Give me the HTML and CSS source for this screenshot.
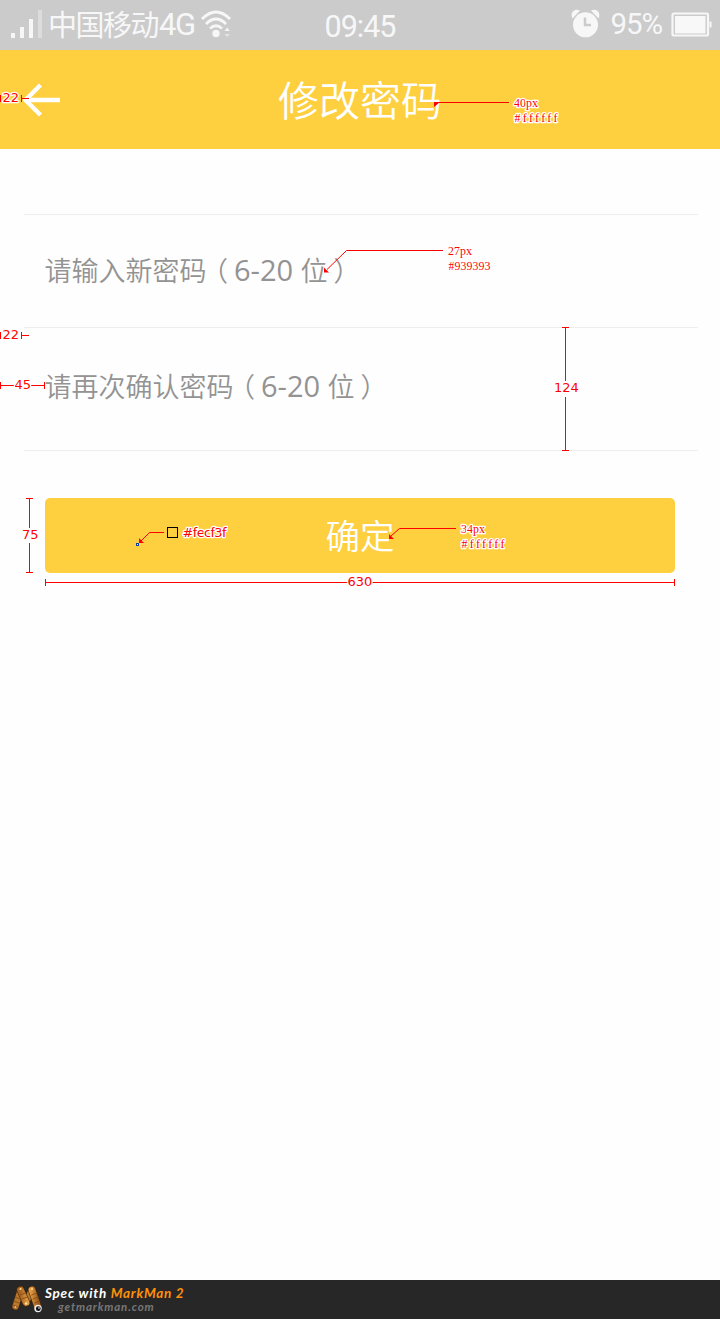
FILE: index.html
```html
<!DOCTYPE html>
<html lang="zh-CN">
<head>
<meta charset="utf-8">
<title>修改密码</title>
<link rel="stylesheet" href="styles.css">
</head>
<body>
<div class="page">
  <div class="status">
    <div class="status-left">
      <svg class="signal" width="34" height="30" viewBox="0 0 34 30">
        <path d="M1 23h4v5H1zM10 17h4v11h-4zM19 9h4v19h-4z" fill="#f7f7f7"/>
        <path d="M28 0h4v28h-4z" fill="#dcdcdc"/>
      </svg>
      <span class="carrier">中国移动</span><span class="network">4G</span>
      <svg class="wifi" width="31" height="30" viewBox="0 0 31 30">
        <g fill="none" stroke="#f7f7f7" stroke-width="2.8">
          <path d="M1 9Q15 -5 29 9"/><path d="M5 14Q15 4 25 14"/><path d="M9 18.500Q15 13 21 18.500"/>
        </g>
        <circle cx="15" cy="23.500" r="3.700" fill="#f7f7f7"/>
        <path d="M23.500 21l2.700-3.500 2.700 3.500z" fill="#f4f4f4"/><path d="M23.500 24h5.400l-2.700 3z" fill="#e4e4e4"/>
      </svg>
    </div>
    <span class="clock">09:45</span>
    <div class="status-right">
      <svg class="alarm" width="29" height="29" viewBox="0 0 29 29">
        <g fill="#f7f7f7"><circle cx="14.500" cy="15.800" r="12.500"/><path d="M1.500 9.500C-1.500 4 3.500-1.500 9 1.500zM27.500 9.500C30.500 4 25.500-1.500 20 1.500z"/></g>
        <path d="M14 8.500v7.500h6" fill="none" stroke="#cbcbcb" stroke-width="2.500"/>
      </svg>
      <span class="percent">95%</span>
      <svg class="battery" width="42" height="26" viewBox="0 0 42 26">
        <rect x="1.500" y="1.500" width="35.500" height="22" rx="1.500" fill="none" stroke="#f7f7f7" stroke-width="2.200"/>
        <rect x="4" y="4" width="30.500" height="17.500" fill="#f8f8f8"/>
        <path d="M38.500 9.500h2v6h-2z" fill="#f7f7f7"/>
      </svg>
    </div>
  </div>
  <header class="header">
    <svg class="back" width="38" height="34" viewBox="0 0 38 34">
      <path d="M37 17H3M17.500 2L2.500 17 17.500 32" fill="none" stroke="#fff" stroke-width="4.500"/>
    </svg>
    <h1 class="title">修改密码</h1>
  </header>
  <main class="form">
    <div class="field first"><span>请输入新密码</span><span class="open">（</span><span class="latin">6-20 </span><span>位</span><span class="close">）</span></div>
    <div class="field second"><span>请再次确认密码</span><span class="open">（</span><span class="latin">6-20 </span><span>位</span><span class="close">）</span></div>
    <div class="submit">确定</div>
  </main>
  <footer class="footer">
    <svg class="logo" width="32" height="30" viewBox="0 0 32 30">
      <defs><linearGradient id="bronze" x1="0" y1="0" x2="1" y2="0"><stop offset="0" stop-color="#a86420"/><stop offset=".5" stop-color="#eda748"/><stop offset="1" stop-color="#9c5b1c"/></linearGradient></defs>
      <g fill="none" stroke-linecap="round">
        <path d="M4.500 21.500L9.500 5.500M20.500 5.500L15 17.500" stroke="#503010" stroke-width="7"/>
        <path d="M4.500 21.500L9.500 5.500M20.500 5.500L15 17.500" stroke="#b9772b" stroke-width="6"/>
        <path d="M9.500 5L15 17.500M21 5L27 22.500" stroke="#4a2908" stroke-width="8"/>
        <path d="M9.500 5L15 17.500M21 5L27 22.500" stroke="url(#bronze)" stroke-width="6.800"/>
        <path d="M2 20l5 2M3 16l5 2M4 12l5 2M20.500 10l5.500-2M22 14l5.500-2M23.500 18l5.500-2M9 10l5.500-2M11 14l5.500-2" stroke="#7b481a" stroke-width=".8"/>
      </g>
      <g fill="#ffe0a0"><circle cx="9.500" cy="4" r="1"/><circle cx="21" cy="4" r="1"/><circle cx="15" cy="18.500" r="1.200"/><circle cx="4.500" cy="22" r=".8"/></g>
      <circle cx="27" cy="23.500" r="3.700" fill="#eee"/><circle cx="27.300" cy="23.700" r="2.400" fill="#10131a"/><circle cx="28" cy="23" r=".8" fill="#fff"/>
    </svg>
    <div class="credit">
      <div class="product">Spec with <span class="accent">MarkMan 2</span></div>
      <div class="site">getmarkman.com</div>
    </div>
  </footer>

  <svg class="notes" width="720" height="1319" viewBox="0 0 720 1319">
    <g class="rule">
      <path d="M0.500 95v7M21.500 95v7M22 98.500h7"/>
      <path d="M0.500 332v7M21.500 332v7M22 335.500h7"/>
      <path d="M0.500 382v7M1 385.500h14M31 385.500h14M44.500 382v7"/>
      <path d="M562 327.500h7M565.500 328v53M565.500 397v53M562 450.500h7"/>
      <path d="M26 498.500h7M29.500 499v29M29.500 543v29M26 572.500h7"/>
      <path d="M45.500 579v7M46 582.500h302M372 582.500h302M674.500 579v7"/>
      <path d="M436 102.500h73"/>
      <path d="M327 269.500L346.500 250.500H443"/>
      <path d="M141 541L149.500 532.500H164"/>
      <path d="M391 536L399.500 528.500H456"/>
    </g>
    <g fill="#f00">
      <path d="M434 102h6l-6 5zM324 267.500l5 5h-5zM139 538l5 5h-5zM389 534l5 5h-5z"/>
    </g>
    <rect x="136.500" y="543.500" width="2" height="2" fill="#fff" stroke="#123eaa"/>
    <rect x="167.500" y="527.500" width="10" height="10" fill="none" stroke="#000"/>
    <g class="measure">
      <text x="2.500" y="102">22</text>
      <text x="2.500" y="339">22</text>
      <text x="14.500" y="389">45</text>
      <text x="554" y="392">124</text>
      <text x="22" y="539">75</text>
      <text x="347.500" y="586">630</text>
      <text x="182.500" y="537" textLength="44">#fecf3f</text>
    </g>
    <g class="spec">
      <text x="514" y="107" textLength="24">40px</text>
      <text x="514.500" y="122" textLength="43">#ffffff</text>
      <text x="448" y="255" textLength="24">27px</text>
      <text x="448.500" y="270" textLength="42">#939393</text>
      <text x="461" y="533" textLength="24">34px</text>
      <text x="461.500" y="548" textLength="43">#ffffff</text>
    </g>
  </svg>
</div>
</body>
</html>
```
FILE: styles.css
```css
* { box-sizing: border-box; }
body { margin: 0; background: #fff; font-family: "Noto Sans CJK SC", sans-serif; }
svg { display: block; flex: none; }
.page { position: relative; display: flex; flex-direction: column; width: 720px; height: 1319px; overflow: hidden; background: #fefefe; }

.status { display: grid; grid-template-columns: 1fr auto 1fr; height: 50px; background: #cbcbcb; color: #f7f7f7; font-family: Roboto, "Noto Sans CJK SC", sans-serif; font-size: 31px; line-height: 50px; }
.status-left, .status-right { display: flex; align-items: flex-start; white-space: nowrap; }
.status-left { padding-left: 10px; }
.signal { margin-top: 10px; margin-right: 4px; }
.carrier { font-family: "Noto Sans CJK SC", sans-serif; font-size: 29px; line-height: 47px; letter-spacing: -1.5px; }
.network { margin-left: 1px; letter-spacing: -1.5px; }
.wifi { margin: 10px 0 0 6px; }
.clock { padding-top: 2px; font-size: 30.5px; letter-spacing: -1px; }
.status-right { justify-content: flex-end; padding-right: 7px; }
.alarm { margin: 9px 11px 0 0; }
.percent { font-size: 29.5px; line-height: 48px; letter-spacing: -1.1px; margin-right: 9px; }
.battery { margin-top: 12px; }

.header { display: grid; grid-template-columns: 60px 1fr 60px; align-items: center; height: 99px; background: #fecf3f; }
.back { margin-left: 23px; }
.title { margin: 0; padding-bottom: 3px; color: #fff; font-size: 41px; font-weight: 350; line-height: 57px; text-align: center; }

.form { flex: 1; padding: 65px 22px 0 24px; }
.field { display: flex; align-items: center; padding-left: 20.5px; border-bottom: 1px solid #eee; color: #939393; font-size: 27px; font-weight: 350; line-height: 40px; }
.first { height: 114px; padding-bottom: 2px; border-top: 1px solid #eee; }
.second { height: 123px; padding-bottom: 6px; }
.latin { font-family: "Open Sans", "Noto Sans", sans-serif; font-size: 29px; font-weight: 400; white-space: pre; }
.open, .close { font-feature-settings: "halt" 1; }
.open { margin: 0 6px 0 8px; }
.close { margin-left: 6px; }
.submit { margin: 47px 23px 0 21px; height: 75px; border-radius: 5px; background: #fecf3f; color: #fff; font-size: 34.5px; font-weight: 350; line-height: 72px; text-align: center; }

.footer { display: flex; height: 39px; padding: 5px 0 0 11px; background: #272727; font-family: Lato, sans-serif; font-style: italic; font-weight: 700; }
.credit { padding-left: 2px; }
.product { color: #fff; font-size: 13.5px; line-height: 17px; letter-spacing: .75px; white-space: nowrap; }
.accent { color: #ff9109; }
.site { padding-left: 13px; color: #777; font-size: 11.5px; line-height: 10px; letter-spacing: .85px; }

.notes { position: absolute; top: 0; left: 0; pointer-events: none; }
.rule { fill: none; stroke: #f00; stroke-width: 1; }
.measure, .spec { fill: #f00; stroke: #fff; stroke-width: 2.5px; stroke-linejoin: round; paint-order: stroke; }
.measure { font-family: "DejaVu Sans", sans-serif; font-size: 13px; }
.spec { font-family: "Liberation Serif", serif; font-size: 12px; font-weight: 400; }
```
